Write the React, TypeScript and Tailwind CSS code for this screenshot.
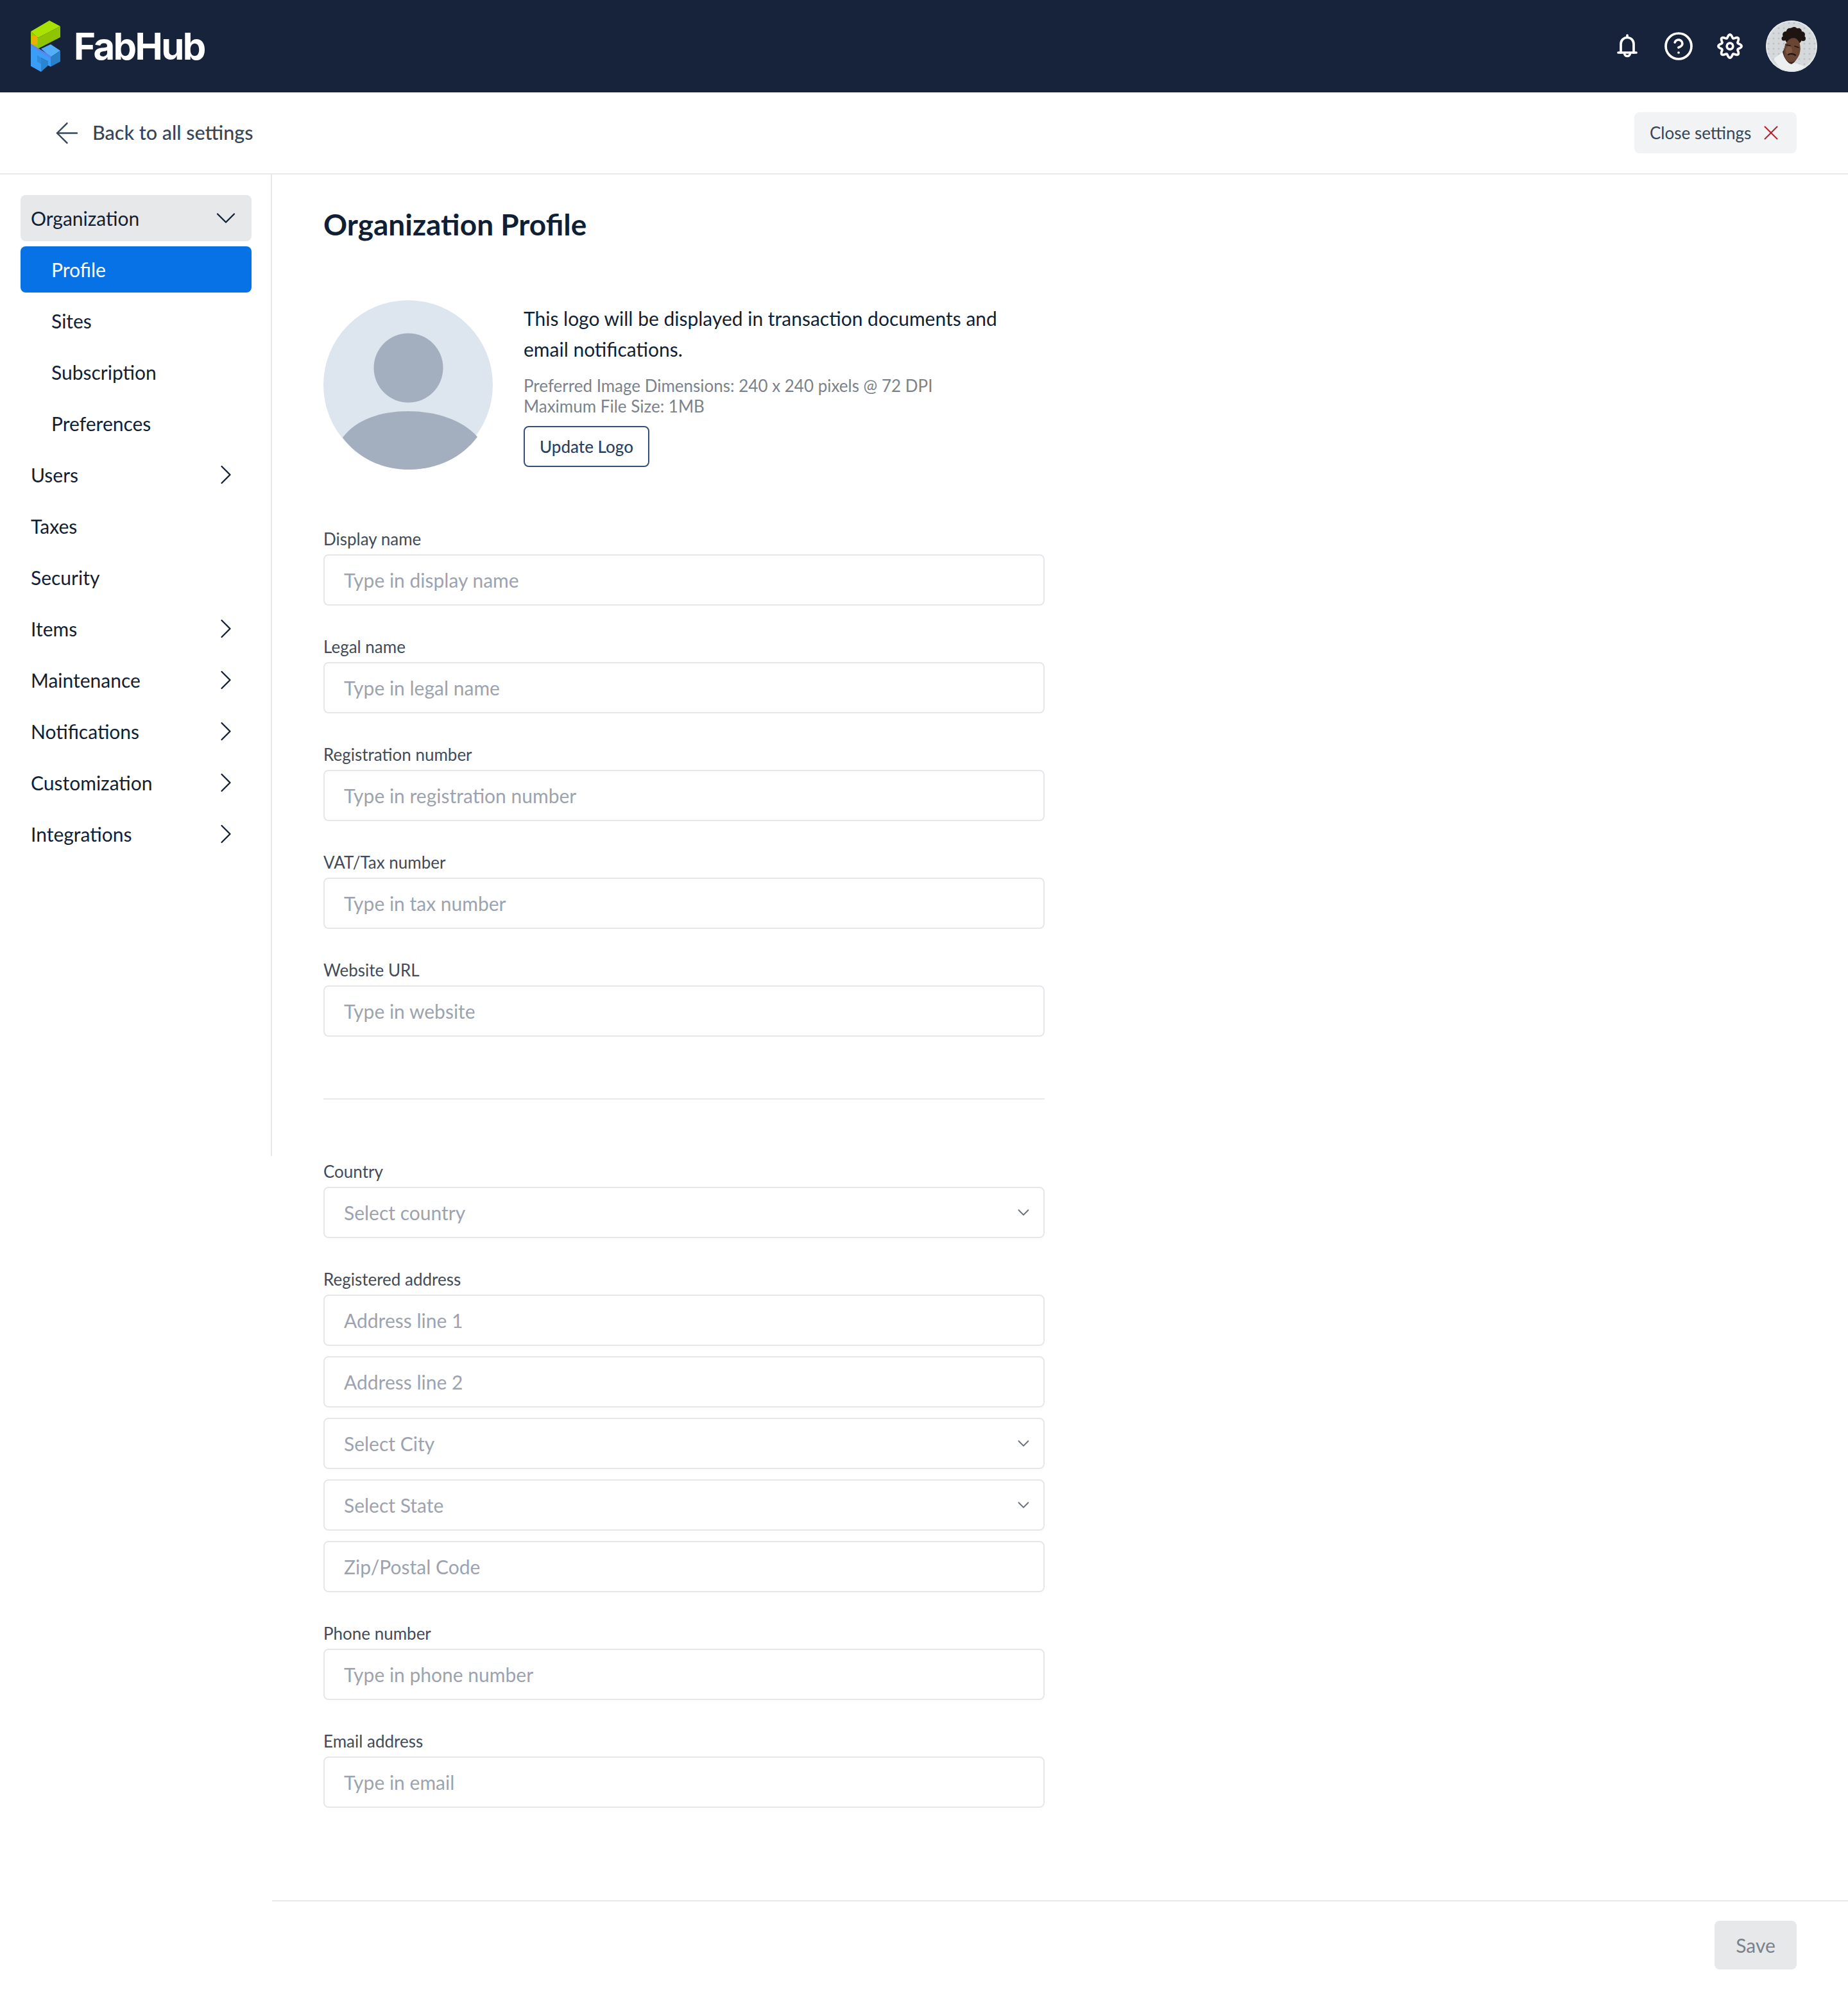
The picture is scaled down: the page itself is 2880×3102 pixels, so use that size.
import { ArrowLeft, ChevronDown, ChevronRight, CircleHelp, X } from "lucide-react";

const navBelow = [
  { label: "Users", arrow: true },
  { label: "Taxes", arrow: false },
  { label: "Security", arrow: false },
  { label: "Items", arrow: true },
  { label: "Maintenance", arrow: true },
  { label: "Notifications", arrow: true },
  { label: "Customization", arrow: true },
  { label: "Integrations", arrow: true },
];

// wavy outline for the gear, 8 rounded teeth
const gearPath =
  Array.from({ length: 144 }, (_, i) => {
    const a = (i / 144) * Math.PI * 2;
    const r = 15.6 + 2.5 * Math.cos(8 * a);
    const x = 24 + r * Math.sin(a);
    const y = 24 - r * Math.cos(a);
    return `${i === 0 ? "M" : "L"}${x.toFixed(2)} ${y.toFixed(2)}`;
  }).join(" ") + "Z";

function Logo() {
  return (
    <svg width="46" height="80" viewBox="0 0 46 80" aria-hidden="true">
      <polygon points="0,17 29,0 46,9 11,27" fill="#a9e200" />
      <polygon points="11,27 46,9 46,26 11,44" fill="#8fc500" />
      <polygon points="0,17 11,27 11,44 0,38" fill="#9ccf00" />
      <polygon points="1,24 10,24 10,37 1,37" fill="#f2ae00" />
      <polygon points="0,38 31,57 31,72 27,70 27,64 16,58 16,80 0,71" fill="#3a9df8" />
      <polygon points="10,54 16,58 16,68 10,64" fill="#2f8de0" />
      <polygon points="16,58 27,64 27,70 16,80" fill="#2a85d0" />
      <polygon points="16,44 31,37 46,47 31,57" fill="#52aef6" />
      <polygon points="31,57 46,47 46,64 31,72" fill="#2a80c8" />
      <polygon points="0,36 31,55 31,59 0,40" fill="#5a86ee" />
    </svg>
  );
}

function Bell() {
  return (
    <svg width="48" height="48" viewBox="0 0 48 48" fill="none" stroke="white" strokeWidth="3.7" strokeLinecap="round" strokeLinejoin="round" aria-hidden="true">
      <path d="M10 34h28" />
      <path d="M14 34V20.5a10 10 0 0 1 20 0V34" />
      <path d="M24 7v3" />
      <path d="M19.5 35a4.5 4.5 0 1 0 9 0" />
    </svg>
  );
}

function Gear() {
  return (
    <svg width="48" height="48" viewBox="0 0 48 48" fill="none" stroke="white" strokeWidth="3.7" strokeLinejoin="round" aria-hidden="true">
      <path d={gearPath} />
      <circle cx="24" cy="24" r="4.8" />
    </svg>
  );
}

function Avatar() {
  return (
    <svg width="80" height="80" viewBox="0 0 80 80" aria-hidden="true" className="rounded-full">
      <defs>
        <pattern id="dots" width="8" height="8" patternUnits="userSpaceOnUse">
          <circle cx="4" cy="4" r="1.5" fill="#bcc3c7" />
        </pattern>
      </defs>
      <rect width="80" height="80" fill="#d5d9db" />
      <rect width="80" height="80" fill="url(#dots)" />
      <path d="M12 60c5-5 10-7 14-11l6 14 20 5c5 2 9 4 12 8l-18 6-22-4z" fill="#eceff0" />
      <path d="M26 49c3-5 4-9 4-13l22 14c-2 8-6 15-12 18-6-1-12-10-14-19z" fill="#3e2720" />
      <g fill="#1e1512">
        <circle cx="31" cy="22" r="5" />
        <circle cx="37" cy="17" r="5" />
        <circle cx="44" cy="15" r="5" />
        <circle cx="51" cy="17" r="5" />
        <circle cx="56" cy="22" r="5" />
        <circle cx="58" cy="28" r="4" />
        <circle cx="28" cy="28" r="3.5" />
        <circle cx="43" cy="25" r="14" />
      </g>
      <ellipse cx="41" cy="46" rx="12.5" ry="19" transform="rotate(10 41 46)" fill="#6b4534" />
      <ellipse cx="36" cy="47" rx="5" ry="7" fill="#7f5744" />
      <path d="M32 38l6 1M45 40l6 2" stroke="#1e1512" strokeWidth="1.6" strokeLinecap="round" />
      <path d="M35 53c4-2 8-1 11 1" stroke="#1e1512" strokeWidth="2.2" strokeLinecap="round" fill="none" />
      <circle cx="40" cy="40" r="39" fill="none" stroke="#e4e7e9" strokeWidth="2" />
    </svg>
  );
}

function Field({ label, text, select, className }: { label?: string; text: string; select?: boolean; className?: string }) {
  return (
    <div className={className}>
      {label && <div className="mb-2 h-8 text-[26px] leading-8 text-[#414b59]">{label}</div>}
      <div className="flex h-20 items-center justify-between rounded-lg border-2 border-[#e5e7eb] pr-4 pl-[30px]">
        <span className="text-[30px] text-[#9ca3af]">{text}</span>
        {select && <ChevronDown size={30} strokeWidth={1.5} className="text-[#6b7280]" />}
      </div>
    </div>
  );
}

export default function App() {
  return (
    <div className="flex h-[3102px] w-[2880px] flex-col overflow-hidden bg-white font-['Lato','Liberation_Sans',sans-serif] text-[#111f35]">
      {/* Top bar */}
      <header className="flex h-36 items-center justify-between bg-[#17233a] pr-12 pl-12">
        <div className="flex items-center gap-[21px]">
          <Logo />
          <span className="font-['Inter',sans-serif] text-[58px] leading-none font-bold tracking-[-2.6px] text-white">FabHub</span>
        </div>
        <div className="flex items-center gap-8">
          <Bell />
          <CircleHelp size={48} strokeWidth={1.85} className="text-white" />
          <Gear />
          <Avatar />
        </div>
      </header>

      {/* Settings bar */}
      <div className="flex h-32 items-center justify-between border-b-2 border-[#e8e9eb] pr-20 pl-[78px]">
        <div className="flex items-center gap-[13px] text-[30.5px] font-medium text-[#374558]">
          <ArrowLeft size={53} strokeWidth={1.1} />
          <span>Back to all settings</span>
        </div>
        <button className="flex h-16 w-[253px] items-center justify-between rounded-lg bg-[#f1f3f5] pr-[21px] pl-6 text-[26px] text-[#374558]">
          Close settings
          <X size={38} strokeWidth={1.2} className="text-[#b5202c]" />
        </button>
      </div>

      <div className="flex flex-1">
        {/* Sidebar */}
        <aside className="h-[1530px] w-[424px] shrink-0 border-r-2 border-[#e8e9eb] px-8 pt-8 text-[30px]">
          <div className="flex h-[72px] w-[360px] items-center justify-between rounded-lg bg-[#e6e8ea] pr-[14px] pl-4">
            <span>Organization</span>
            <ChevronDown size={52} strokeWidth={1.05} />
          </div>
          <div className="mt-2 flex h-[72px] w-[360px] items-center rounded-lg bg-[#0772e5] pl-12 text-white">Profile</div>
          <div className="mt-2 flex h-[72px] items-center pl-12">Sites</div>
          <div className="mt-2 flex h-[72px] items-center pl-12">Subscription</div>
          <div className="mt-2 flex h-[72px] items-center pl-12">Preferences</div>
          {navBelow.map((item) => (
            <div key={item.label} className="mt-2 flex h-[72px] w-[360px] items-center justify-between pr-[14px] pl-4">
              <span>{item.label}</span>
              {item.arrow && <ChevronRight size={52} strokeWidth={1.05} />}
            </div>
          ))}
        </aside>

        {/* Main */}
        <main className="flex min-w-0 flex-1 flex-col">
          <div className="flex-1 pt-[46px] pl-20">
            <h1 className="h-[64px] text-[46px] leading-[64px] font-bold">Organization Profile</h1>

            <div className="mt-[86px] flex gap-12">
              <svg width="264" height="264" viewBox="0 0 264 264" aria-hidden="true">
                <circle cx="132" cy="132" r="132" fill="#dde5ee" />
                <ellipse cx="132.5" cy="105.5" rx="54" ry="54" fill="#a3afbe" />
                <path d="M30 214C51 186 89 173 132 173s84 13 108 40c-24 32-62 51-107 51-43 0-80-19-103-50z" fill="#a3afbe" />
              </svg>
              <div className="pt-1">
                <p className="text-[30px] leading-[48px]">
                  This logo will be displayed in transaction documents and
                  <br />
                  email notifications.
                </p>
                <p className="mt-[17px] text-[26px] leading-8 text-[#7a828c]">
                  Preferred Image Dimensions: 240 x 240 pixels @ 72 DPI
                  <br />
                  Maximum File Size: 1MB
                </p>
                <button className="mt-[15px] flex h-16 w-[196px] items-center justify-center rounded-lg border-2 border-[#34507a] text-[26px] font-medium text-[#2a4365]">
                  Update Logo
                </button>
              </div>
            </div>

            <div className="mt-[92px] flex w-[1124px] flex-col gap-12">
              <Field label="Display name" text="Type in display name" />
              <Field label="Legal name" text="Type in legal name" />
              <Field label="Registration number" text="Type in registration number" />
              <Field label="VAT/Tax number" text="Type in tax number" />
              <Field label="Website URL" text="Type in website" />
            </div>

            <div className="mt-24 h-0.5 w-[1124px] bg-[#e8e9eb]" />

            <div className="mt-[96px] flex w-[1124px] flex-col gap-12">
              <Field label="Country" text="Select country" select />
              <div className="flex flex-col gap-4">
                <Field label="Registered address" text="Address line 1" />
                <Field text="Address line 2" />
                <Field text="Select City" select />
                <Field text="Select State" select />
                <Field text="Zip/Postal Code" />
              </div>
              <Field label="Phone number" text="Type in phone number" />
              <Field label="Email address" text="Type in email" />
            </div>
          </div>

          <footer className="flex h-[140px] justify-end border-t-2 border-[#e8e9eb] pt-[30px] pr-20">
            <button className="h-[76px] w-32 rounded-lg bg-[#e6e8ea] text-[30px] text-[#7a828c]">Save</button>
          </footer>
        </main>
      </div>
    </div>
  );
}
